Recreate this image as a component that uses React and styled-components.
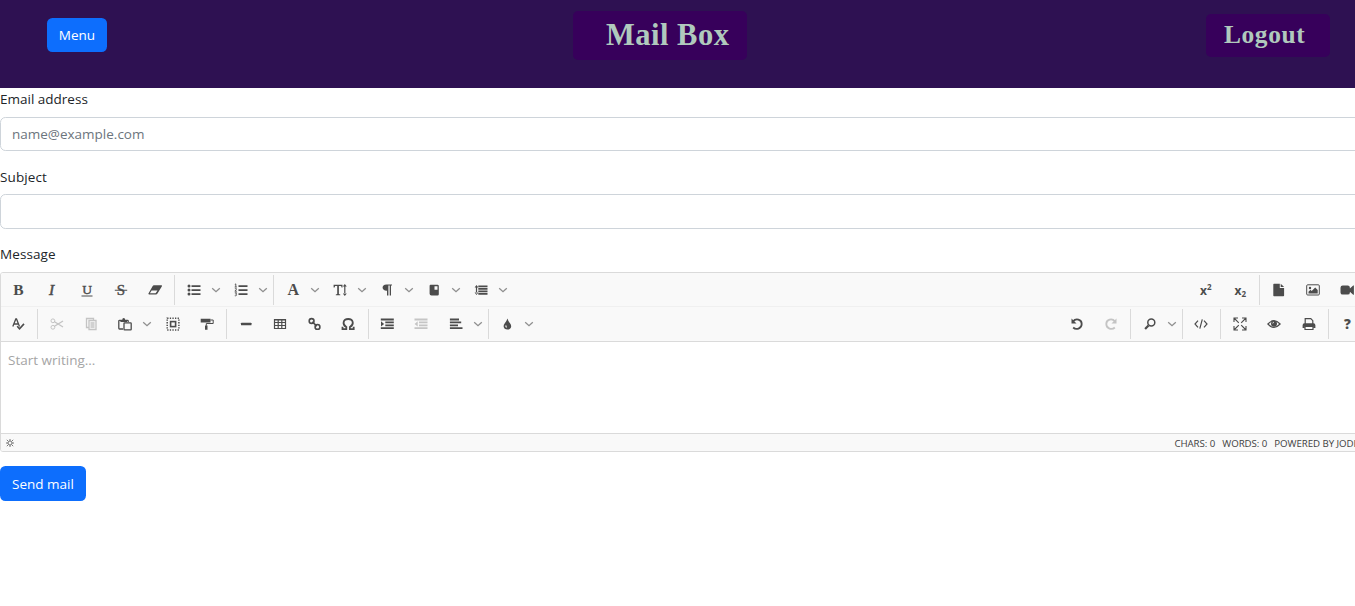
import React from "react";
import styled, { createGlobalStyle } from "styled-components";

const sans = `"Open Sans", "Noto Sans", sans-serif`;
const serif = `"Liberation Serif", serif`;

const GlobalStyle = createGlobalStyle`
  * { box-sizing: border-box; }
  html, body { margin: 0; height: 100%; overflow: hidden; background: #fff; }
  body { font-family: ${sans}; font-size: 13.5px; line-height: 21.6px; color: #212529; }
`;

const Header = styled.header`
  display: grid;
  grid-template-columns: 573px 174px 1fr;
  align-items: start;
  height: 88px;
  background: #2e1152;
`;

const Button = styled.button`
  height: ${(p) => p.$height || 34}px;
  width: ${(p) => p.$width}px;
  padding: 0;
  border: 0;
  border-radius: 5.4px;
  background: #0d6efd;
  color: #fff;
  font: 13.5px/${(p) => p.$height || 34}px ${sans};
  display: block;
`;

const MenuButton = styled(Button)`
  margin: 18px 0 0 47px;
`;

const SendButton = styled(Button)`
  padding-top: 1px;
`;

const Plaque = styled.div`
  height: ${(p) => p.$height}px;
  width: ${(p) => p.$width}px;
  margin-top: ${(p) => p.$top}px;
  padding-left: ${(p) => p.$inset}px;
  border-radius: 5px;
  background: #37005b;
  color: #b0c9bd;
  font: bold ${(p) => p.$size}px/${(p) => p.$line}px ${serif};
  letter-spacing: ${(p) => p.$spacing}px;
  white-space: nowrap;
`;

const LogoutPlaque = styled(Plaque)`
  justify-self: end;
  margin-right: 25px;
`;

const Form = styled.main`
  width: 1365.4px;
`;

const Field = styled.div`
  margin-bottom: 14.4px;
`;

const Label = styled.label`
  display: block;
  height: 21.6px;
  margin-bottom: 7.2px;
  padding-top: 1px;
  letter-spacing: ${(p) => p.$spacing || 0}px;
`;

const Input = styled.input`
  display: block;
  width: 100%;
  height: 34.4px;
  padding: 0 11px;
  border: 1px solid #ced4da;
  border-radius: 5.4px;
  font: 13.5px/21.6px ${sans};
  background: #fff;
  &::placeholder { color: #6c757d; opacity: 1; }
`;

const Editor = styled.section`
  height: 179.6px;
  display: flex;
  flex-direction: column;
  border: 1px solid #dadada;
  border-radius: 3px;
  background: #fff;
  overflow: hidden;
`;

const Toolbar = styled.div`
  background: #f9f9f9;
  border-bottom: 1px solid #dadada;
`;

const ToolRow = styled.div`
  display: flex;
  justify-content: space-between;
  height: 33px;
  padding-top: 1px;
  & + & { border-top: 1px solid #f0f0f0; height: 35px; padding-top: 0; }
`;

const ToolGroup = styled.div`
  display: flex;
  align-items: center;
`;

const Divider = styled.span`
  width: 1px;
  height: 30px;
  margin: 0 1.4px 0 2px;
  background: #dadada;
`;

const Tool = styled.span`
  width: ${(p) => (p.$split ? 47.1 : 34.3)}px;
  height: 32px;
  padding-left: 10.15px;
  display: flex;
  align-items: center;
  gap: 10px;
  color: #4c4c4c;
`;

const Glyph = styled.svg`
  width: 14px;
  height: 14px;
  flex: none;
  overflow: visible;
  opacity: ${(p) => (p.$muted ? 0.3 : 1)};
  fill: currentColor;
  stroke: none;
`;

const Chevron = styled.svg`
  width: 10px;
  height: 10px;
  flex: none;
  fill: none;
  stroke: #8f8f8f;
  stroke-width: 1.3;
`;

const Writing = styled.div`
  flex: 1;
  padding: 8px 7px;
  color: #a5a5a5;
`;

const StatusBar = styled.footer`
  height: 18px;
  padding: 1px 4px 0 5px;
  display: flex;
  align-items: center;
  justify-content: space-between;
  border-top: 1px solid #dadada;
  background: #f9f9f9;
  color: #404040;
  font-size: 9.7px;
  line-height: 17px;
`;

const Counters = styled.div`
  display: flex;
  gap: 7px;
  width: 186px;
  white-space: nowrap;
  padding-top: 1px;
  letter-spacing: -0.05px;
`;

const Gear = styled.svg`
  width: 8px;
  height: 8px;
  fill: none;
  stroke: #777;
`;

const line = { fill: "none", stroke: "currentColor" };
const serifText = { fontFamily: "Liberation Serif, serif", textAnchor: "middle" };

const art = {
  bold: <text {...serifText} x="7.4" y="12" fontSize="15.5" fontWeight="bold">B</text>,
  italic: <text {...serifText} x="6.700" y="12" fontSize="15.5" fontStyle="italic" stroke="currentColor" strokeWidth=".5">I</text>,
  underline: <><text {...serifText} x="7" y="11" fontSize="13.5" stroke="currentColor" strokeWidth=".4">U</text><path d="M1.500 12.400h11v1h-11z" /></>,
  strike: <><text {...serifText} x="7" y="12" fontSize="15" stroke="currentColor" strokeWidth=".4">S</text><path d="M.800 6.800h12.400v1H.800z" /></>,
  eraser: <path fillRule="evenodd" d="M5.900 2.300h7.300c.700 0 1 .600.600 1.100L9.300 10.700q-.500.700-1.300.700H1.200c-.800 0-1.100-.600-.600-1.200l4.100-7.100q.400-.800 1.200-.8M3.600 7.400L1.900 10.200h5.700l1.900-2.800z" />,
  ul: <><circle cx="2" cy="3" r="1.500" /><circle cx="2" cy="7" r="1.500" /><circle cx="2" cy="11" r="1.500" /><path d="M4.500 2.200h9v1.700h-9zM4.500 6.200h9v1.700h-9zM4.500 10.200h9v1.700h-9z" /></>,
  ol: <><path d="M4.500 2.200h9v1.700h-9zM4.500 6.200h9v1.700h-9zM4.500 10.200h9v1.700h-9z" /><path {...line} strokeWidth=".9" d="M.8 1.500l1-.6v3M.7 4h2.200M.8 5.800c.5-.7 2-.5 1.700.3L.9 8.200h2M.8 9.800h1.900l-1 1.400c1.600 0 1.200 2-.9 1.500" /></>,
  font: <text {...serifText} x="7.300" y="12.300" fontSize="16" fontWeight="bold">A</text>,
  size: <><path d="M.6 1.700h8.900v2.900h-.9l-.5-1.500H5.900v8l1.400.4v.8H2.800v-.8l1.400-.4v-8H2.100l-.5 1.500h-1z" /><path d="M11.200 3h1.200v8h-1.200zM11.800 1l2 2.600h-4zM11.800 13l2-2.600h-4z" /></>,
  paragraph: <path d="M6.500 1.500H12v1h-1v10H9.700v-10H8.400v10H7V7.800C1.500 8 1 1.700 6.500 1.500" />,
  background: <path fillRule="evenodd" d="M3.500 1.700h7q1.300 0 1.300 1.300v8.200q0 1.300-1.300 1.300h-6q-1.900 0-1.900-1.700V3q0-1.300.9-1.300M7.500 3.300v3.500h3V3.300z" />,
  spacing: <path d="M4.300 2.400h9.200v1.800H4.300zM4.300 4.900h9.200v1.800H4.300zM4.300 7.400h9.200v1.800H4.300zM4.300 9.900h9.200v1.800H4.300zM1.900 3.500h1.200v7H1.900zM2.500 2l1.900 2.500H.6zM2.500 12l1.900-2.500H.6z" />,
  sup: <><text x="1" y="12" fontFamily="Open Sans" fontWeight="bold" fontSize="12">x</text><text x="8" y="7.300" fontFamily="Open Sans" fontWeight="bold" fontSize="8">2</text></>,
  sub: <><text x="1.500" y="12" fontFamily="Open Sans" fontWeight="bold" fontSize="12">x</text><text x="8.500" y="14" fontFamily="Open Sans" fontWeight="bold" fontSize="8">2</text></>,
  file: <path d="M2 .7h5.800v4.200h4.300v7.600q0 .7-.7.700H2q-.7 0-.7-.7V1.400Q1.300.7 2 .7M8.700.7l3.400 3.400H8.700z" />,
  image: <><rect {...line} x=".7" y="1.800" width="12.600" height="10.200" rx="1" /><circle cx="4" cy="5" r="1.200" /><path d="M2.500 10.500V8.700l2-2 1.200 1.200 3.500-3.500 2.500 2.500v3.600z" /></>,
  video: <path d="M2.700 2.500h5q2.200 0 2.200 2.200v.8l3.300-3h.7v9.200h-.7l-3.300-3v.7q0 2.200-2.200 2.200h-5Q.5 11.600.5 9.400V4.700q0-2.200 2.200-2.200" />,
  spell: <><path {...line} strokeWidth="1.300" d="M1.800 9.500L4.800 2h.7l3 7.500M3 7h4.200" /><path {...line} strokeWidth="1.600" d="M6.200 9.300l2.300 2.600 4.500-5" /></>,
  cut: <><circle {...line} cx="2.900" cy="3.800" r="1.900" /><circle {...line} cx="2.900" cy="10.300" r="1.900" /><path {...line} strokeWidth="1.300" d="M4.500 4.800L13 10M4.500 9.300L13 4" /></>,
  copy: <><path {...line} strokeWidth="1.300" d="M5 10.500h-2.500v-9h7v2" /><path {...line} strokeWidth="1.300" d="M5 3.500h7v9h-7zM6.500 6h4M6.500 8h4M6.500 10h4" /></>,
  paste: <><path {...line} strokeWidth="1.300" d="M5 12H1.500q-.7 0-.7-.7V4q0-.7.7-.7h8q.7 0 .7.700v1" /><path d="M2.400 5V3.200h1.800q0-2.200 1.500-2.200t1.500 2.200h1.800V5z" /><rect {...line} strokeWidth="1.300" x="6" y="5.800" width="7.200" height="7" rx=".6" /></>,
  select: <><rect {...line} strokeWidth="1.500" strokeDasharray="1.300 1.300" x="1.200" y="1.200" width="11.700" height="11.700" /><rect {...line} strokeWidth="1.600" x="4.600" y="4.600" width="5" height="5" /></>,
  brush: <><path d="M.7 1.800h9.800v3.800H.7zM5 8.500h2.500v4.200H5z" /><path {...line} d="M10.500 3h2.700v3.500H6.300v2.300" /></>,
  hr: <rect x="2" y="5.700" width="10.500" height="2.600" rx=".6" />,
  table: <path {...line} strokeWidth="1.200" d="M1.500 2.500h11v9h-11zM1.500 5.500h11M1.500 8.500h11M5.200 2.500v9M8.800 2.500v9M1.500 3h11" />,
  link: <><circle {...line} strokeWidth="1.600" cx="4.600" cy="4" r="2.400" /><circle {...line} strokeWidth="1.600" cx="10.500" cy="9.900" r="2.400" /><path {...line} strokeWidth="1.500" d="M5.200 4.900l4.700 4.200" /></>,
  omega: <path {...line} strokeWidth="1.800" d="M1.500 9.700v2.500h3.800V10C1 7.500 1.900 2 7.200 2s6.200 5.500 1.700 8v2.200h3.800V9.700" />,
  indent: <path d="M.8 1.600h13v1.800H.8zM5.300 4.500h8.500v1.800H5.300zM5.300 7.400h8.500v1.800H5.300zM.8 10.300h13v1.800H.8zM1 4.300L4.100 7 1 9.600z" />,
  outdent: <path d="M.5 1.600h13v1.800H.5zM5 4.500h8.500v1.800H5zM5 7.400h8.500v1.800H5zM.5 10.300h13v1.800H.5zM3.700 4.300L.6 7l3.100 2.600z" />,
  align: <path d="M.9 1.600H10v1.800H.9zM.9 4.500h11.300v1.800H.9zM.9 7.400H9v1.800H.9zM.9 10.300h12.600v1.800H.9z" />,
  drop: <path fillRule="evenodd" d="M7.400 1.500Q8.100 4 10 6.300c2.700 3.300.4 6.200-2.600 6.200S2.100 9.600 4.800 6.300Q6.700 4 7.400 1.500M6 7.700c-1.400 2-.2 3 1 2.800z" />,
  undo: <><path {...line} strokeWidth="1.800" d="M3 4.500C5.800.8 11.700 2.300 11.700 7S6 13.300 3.200 10.500" /><path d="M1.500 1.500v5h5z" /></>,
  redo: <><path {...line} strokeWidth="1.800" d="M11 4.500C8.200.8 2.300 2.300 2.300 7S8 13.300 10.800 10.500" /><path d="M12.500 1.500v5h-5z" /></>,
  search: <><circle {...line} strokeWidth="1.500" cx="8.300" cy="5.600" r="3.500" /><path {...line} strokeWidth="2.200" d="M5.500 8.400l-3.400 3.500" /></>,
  source: <path {...line} strokeWidth="1.200" d="M4 3.700L1 7l3 3.300M10 3.700L13 7l-3 3.300M8.300 2.300l-2.500 9.400" />,
  full: <path {...line} strokeWidth="1.100" d="M1 5V1h4M9 1h4v4M13 9v4H9M5 13H1V9M1 1l4.800 4.800M13 1L8.200 5.800M13 13L8.200 8.200M1 13l4.800-4.800" />,
  eye: <><path {...line} strokeWidth="1.200" d="M.9 7Q7 .3 13.100 7 7 13.700.9 7z" /><circle cx="7" cy="6.800" r="3" /><path d="M5.700 6.500Q5.700 5.200 7 5.200" fill="none" stroke="#f9f9f9" strokeWidth=".8" /></>,
  print: <><path {...line} strokeWidth="1.200" d="M3.200 7V1.700h5.600l2 2V7M3 9.500h8v3H3z" /><path fillRule="evenodd" d="M2.500 6.300h9q1.900 0 1.900 1.900v2.900h-2.200V9H2.800v2.100H.6V8.200q0-1.900 1.900-1.900" /></>,
  help: <text x="7.300" y="12" textAnchor="middle" fontFamily="Open Sans" fontWeight="800" fontSize="13.500">?</text>,
};

function ToolItems({ names }) {
  return names.map((entry, i) => {
    if (entry === "|") return <Divider key={i} />;
    const split = entry.endsWith("+");
    const muted = entry.endsWith("-");
    const name = entry.replace(/[+-]$/, "");
    return (
      <Tool key={i} $split={split}>
        <Glyph viewBox="0 0 14 14" $muted={muted}>{art[name]}</Glyph>
        {split && <Chevron viewBox="0 0 10 10"><path d="M1.200 3.200L5 6.700l3.800-3.500" /></Chevron>}
      </Tool>
    );
  });
}

const rows = [
  {
    left: ["bold", "italic", "underline", "strike", "eraser", "|", "ul+", "ol+", "|", "font+", "size+", "paragraph+", "background+", "spacing+"],
    right: ["sup", "sub", "|", "file", "image", "video"],
  },
  {
    left: ["spell", "|", "cut-", "copy-", "paste+", "select", "brush", "|", "hr", "table", "link", "omega", "|", "indent", "outdent-", "align+", "|", "drop+"],
    right: ["undo", "redo-", "|", "search+", "|", "source", "|", "full", "eye", "print", "|", "help"],
  },
];

export default function App() {
  return (
    <>
      <GlobalStyle />
      <Header>
        <MenuButton $width={60}>Menu</MenuButton>
        <Plaque $width={174} $height={49} $top={11} $inset={33} $size={30.5} $line={48} $spacing={0.5}>Mail Box</Plaque>
        <LogoutPlaque $width={124} $height={43} $top={14} $inset={18} $size={25.4} $line={41} $spacing={0.6}>Logout</LogoutPlaque>
      </Header>
      <Form>
        <Field>
          <Label>Email address</Label>
          <Input placeholder="name@example.com" />
        </Field>
        <Field>
          <Label $spacing={0.1}>Subject</Label>
          <Input />
        </Field>
        <Field>
          <Label as="div" $spacing={0.1}>Message</Label>
          <Editor>
            <Toolbar>
              {rows.map((row, i) => (
                <ToolRow key={i}>
                  <ToolGroup><ToolItems names={row.left} /></ToolGroup>
                  <ToolGroup><ToolItems names={row.right} /></ToolGroup>
                </ToolRow>
              ))}
            </Toolbar>
            <Writing>Start writing...</Writing>
            <StatusBar>
              <Gear viewBox="0 0 8 8">
                <circle cx="4" cy="4" r="2" />
                <path d="M4 0v2M4 6v2M0 4h2M6 4h2M.8.800l1.500 1.500M5.700 5.700l1.500 1.500M7.200.800L5.700 2.300M2.300 5.700L.800 7.200" />
              </Gear>
              <Counters>
                <span>CHARS: 0</span>
                <span>WORDS: 0</span>
                <span>POWERED BY JODIT</span>
              </Counters>
            </StatusBar>
          </Editor>
        </Field>
        <SendButton $width={86} $height={35}>Send mail</SendButton>
      </Form>
    </>
  );
}
